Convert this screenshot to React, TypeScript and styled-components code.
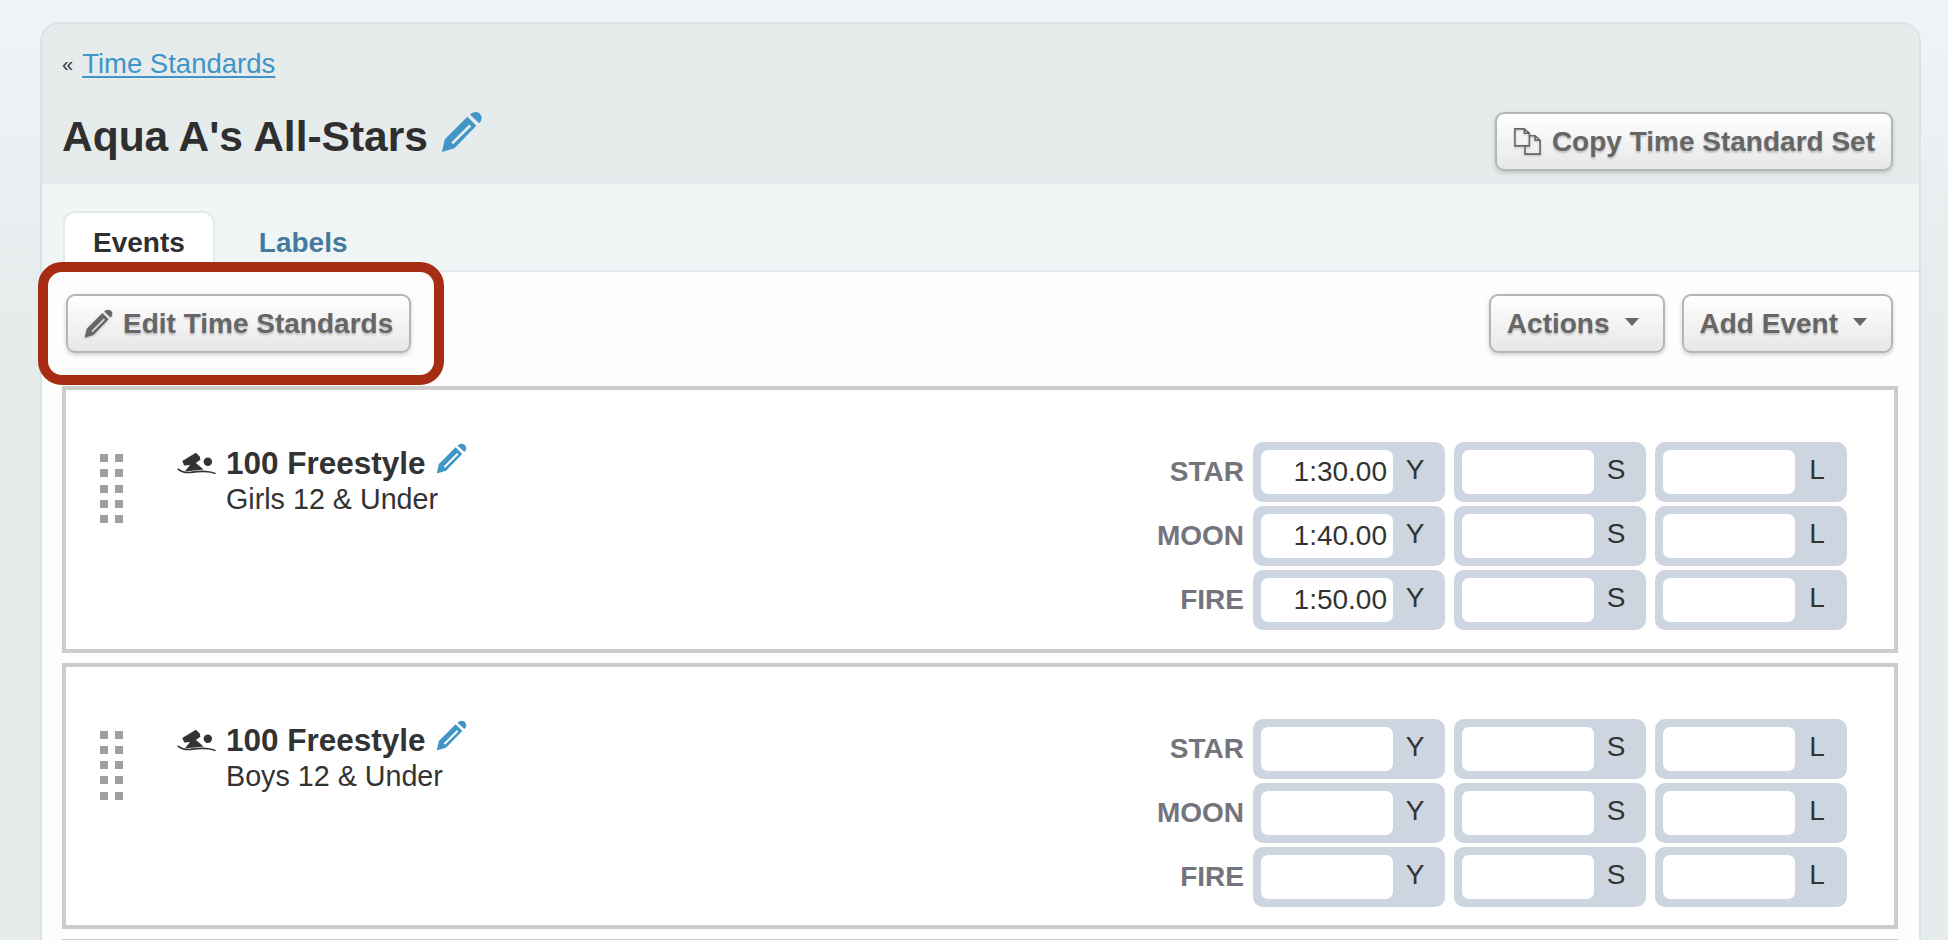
import styled, { createGlobalStyle } from 'styled-components'

const GlobalStyle = createGlobalStyle`
  html, body {
    margin: 0;
    height: 940px;
    overflow: hidden;
  }
  body {
    font-family: "Liberation Sans", Arial, sans-serif;
    color: #333;
    background: linear-gradient(to bottom, #eff5f7 0, #e6ecec 320px);
  }
`

const Page = styled.div`
  position: relative;
  height: 940px;
  overflow: hidden;
  padding: 22px 27px 0 40px;
  box-sizing: border-box;
`

const Panel = styled.div`
  border: 2px solid #d8e3e7;
  border-bottom: 0;
  border-radius: 20px 20px 0 0;
  overflow: hidden;
  background: #fdfdfd;
`

const Header = styled.div`
  height: 160px;
  box-sizing: border-box;
  padding: 20px 26px 0 20px;
  background: #e6ecec;
  border-bottom: 2px solid #e3eaed;
  display: flex;
  justify-content: space-between;
  align-items: flex-start;
`

const Crumb = styled.div`
  font-size: 27.5px;
  line-height: 40px;
  display: flex;
  align-items: center;
  gap: 9px;
`

const CrumbMark = styled.span`
  font-size: 20px;
  color: #333;
`

const CrumbLink = styled.a`
  color: #3f94c8;
  text-decoration: underline;
  text-underline-offset: 3px;
`

const TitleRow = styled.div`
  display: flex;
  align-items: flex-start;
  margin-top: 30px;
  gap: 13px;
`

const Title = styled.h1`
  margin: 0;
  font-size: 42.5px;
  line-height: 46px;
  font-weight: 700;
  color: #2f2f2f;
`

const TitlePencil = styled.span`
  margin-top: -3px;
  display: flex;
`

const Button = styled.button<{ $top?: number }>`
  height: 59px;
  margin-top: ${p => p.$top ?? 0}px;
  box-sizing: border-box;
  padding: 0 16px;
  display: inline-flex;
  align-items: center;
  border: 2px solid #b5b5b5;
  border-radius: 9px;
  background: linear-gradient(to bottom, #ffffff, #e7e7e7);
  box-shadow: 0 2px 4px rgba(0, 0, 0, 0.18);
  color: #666;
  font: 700 28px "Liberation Sans", Arial, sans-serif;
  text-shadow: 0 2px 2px rgba(0, 0, 0, 0.2);
  white-space: nowrap;
`

const ButtonIcon = styled.svg<{ $gap: number }>`
  margin-right: ${p => p.$gap}px;
  flex: none;
  filter: drop-shadow(0 1px 1px rgba(0, 0, 0, 0.2));
`

const Caret = styled.span`
  width: 0;
  height: 0;
  margin: -4px 8px 0 15px;
  border-left: 7px solid transparent;
  border-right: 7px solid transparent;
  border-top: 8px solid #666;
`

const TabBar = styled.div`
  height: 88px;
  box-sizing: border-box;
  padding-left: 21px;
  background: #f0f6f6;
  border-bottom: 2px solid #e2eaee;
  display: flex;
  align-items: flex-end;
  gap: 12px;
`

const Tab = styled.div<{ $active?: boolean }>`
  height: ${p => p.$active ? 61 : 57}px;
  box-sizing: border-box;
  padding: 0 ${p => p.$active ? 28 : 30}px;
  display: flex;
  align-items: center;
  font-size: 28px;
  font-weight: 700;
  color: ${p => p.$active ? '#2f2f2f' : '#457a9f'};
  background: ${p => p.$active ? '#fff' : 'transparent'};
  border: 2px solid ${p => p.$active ? '#e3eaee' : 'transparent'};
  border-bottom: 0;
  border-radius: 12px 12px 0 0;
  margin-bottom: ${p => p.$active ? -2 : 0}px;
`

const Toolbar = styled.div`
  height: 114px;
  box-sizing: border-box;
  padding: 22px 26px 0 24px;
  display: flex;
  justify-content: space-between;
  align-items: flex-start;
`

const ToolGroup = styled.div`
  display: flex;
  gap: 17px;
`

const Cards = styled.div`
  padding: 0 21px 0 20px;
  display: flex;
  flex-direction: column;
  gap: 10px;
`

const Card = styled.div`
  height: 266.5px;
  box-sizing: border-box;
  border: 4px solid #ccc;
  background: #fff;
  padding: 52px 47px 0 34px;
  display: flex;
`

const Handle = styled.div`
  width: 23px;
  height: 69px;
  margin-top: 12px;
  flex: none;
  display: grid;
  grid-template-columns: 8px 8px;
  grid-auto-rows: 8px;
  justify-content: space-between;
  align-content: space-between;
`

const Dot = styled.span`
  background: #9f9f9f;
`

const EventInfo = styled.div`
  margin: 3px 0 0 54px;
  display: flex;
  gap: 10px;
  flex: 1;
`

const SwimIcon = styled.svg`
  margin-top: 7px;
  flex: none;
`

const EventName = styled.div`
  display: flex;
  align-items: flex-start;
  gap: 10px;
  font-size: 31.5px;
  line-height: 36px;
  font-weight: 700;
  color: #333;
`

const EventPencil = styled.span`
  margin-top: -2px;
  display: flex;
`

const EventGroup = styled.div`
  font-size: 28.7px;
  line-height: 36px;
  color: #333;
`

const Standards = styled.div`
  display: flex;
  flex-direction: column;
  gap: 4px;
`

const StandardRow = styled.div`
  display: flex;
  align-items: center;
  justify-content: flex-end;
  gap: 9px;
`

const StandardName = styled.div`
  font-size: 28px;
  font-weight: 700;
  color: #74747c;
`

const TimeGroup = styled.label`
  width: 192px;
  height: 60px;
  box-sizing: border-box;
  padding: 8px;
  border-radius: 10px;
  background: #cdd5e0;
  display: flex;
  align-items: flex-start;
`

const TimeInput = styled.input`
  width: 132px;
  height: 44px;
  box-sizing: border-box;
  padding: 0 6px 0 0;
  border: 0;
  border-radius: 7px;
  background: #fff;
  text-align: right;
  color: #333;
  font: 400 28px "Liberation Sans", Arial, sans-serif;
`

const Course = styled.span`
  flex: 1;
  text-align: center;
  line-height: 40px;
  font-size: 28px;
  color: #333;
`

const Callout = styled.div`
  position: absolute;
  left: 38px;
  top: 262px;
  width: 406px;
  height: 123px;
  box-sizing: border-box;
  border: 10px solid #a62c14;
  border-radius: 24px;
  pointer-events: none;
`

const Pencil = ({ size, color }: { size: number; color: string }) => (
  <svg width={size} height={size} viewBox="30 20 134 134">
    <path
      fill={color}
      fillRule="evenodd"
      d="M33 148 L42 108 L112 38 L140 66 L72 136 Z M62 118 L68 124 L124 68 L118 62 Z"
    />
    <path fill={color} d="M120 31 Q134 17 150 27 Q164 42 149 58 Z" />
  </svg>
)

const Swimmer = () => (
  <SwimIcon width={39} height={22} viewBox="18 12 120 68">
    <circle cx="113" cy="42" r="13" fill="#333" />
    <path fill="#333" d="M34 40 L76 14 L88 26 L90 36 L76 46 L100 66 L42 72 L58 52 L40 54 Z" />
    <path fill="none" stroke="#333" strokeWidth="5" d="M20 64 C30 72 42 77 60 75 C80 72 100 71 115 73 C125 74 130 76 137 79" />
  </SwimIcon>
)

const CopyIcon = () => (
  <ButtonIcon $gap={10} width={29} height={31} viewBox="22 10 92 92">
    <path
      fill="none"
      stroke="#666"
      strokeWidth="5"
      d="M28 16 H58 L74 30 V70 H28 Z M58 16 V30 H74 M74 38 H92 L108 52 V96 H60 V70 M92 38 V52 H108"
    />
  </ButtonIcon>
)

const EditIcon = () => (
  <ButtonIcon $gap={9} width={30} height={30} viewBox="30 20 134 134">
    <path fill="#666" fillRule="evenodd" d="M33 148 L42 108 L112 38 L140 66 L72 136 Z M62 118 L68 124 L124 68 L118 62 Z" />
    <path fill="#666" d="M120 31 Q134 17 150 27 Q164 42 149 58 Z" />
  </ButtonIcon>
)

const standards = ['STAR', 'MOON', 'FIRE']
const courses = ['Y', 'S', 'L']

const EventCard = ({ group, times }: { group: string; times?: string[] }) => (
  <Card>
    <Handle>
      {Array.from({ length: 10 }, (_, i) => <Dot key={i} />)}
    </Handle>
    <EventInfo>
      <Swimmer />
      <div>
        <EventName>
          100 Freestyle
          <EventPencil><Pencil size={32} color="#4295c7" /></EventPencil>
        </EventName>
        <EventGroup>{group}</EventGroup>
      </div>
    </EventInfo>
    <Standards>
      {standards.map((name, row) => (
        <StandardRow key={name}>
          <StandardName>{name}</StandardName>
          {courses.map(course => (
            <TimeGroup key={course}>
              <TimeInput readOnly value={course === 'Y' && times ? times[row] : ''} />
              <Course>{course}</Course>
            </TimeGroup>
          ))}
        </StandardRow>
      ))}
    </Standards>
  </Card>
)

export default function App() {
  return (
    <Page>
      <GlobalStyle />
      <Panel>
        <Header>
          <div>
            <Crumb>
              <CrumbMark>«</CrumbMark>
              <CrumbLink href="#">Time Standards</CrumbLink>
            </Crumb>
            <TitleRow>
              <Title>Aqua A's All-Stars</Title>
              <TitlePencil><Pencil size={43} color="#4295c7" /></TitlePencil>
            </TitleRow>
          </div>
          <Button $top={68}>
            <CopyIcon />
            Copy Time Standard Set
          </Button>
        </Header>
        <TabBar>
          <Tab $active>Events</Tab>
          <Tab>Labels</Tab>
        </TabBar>
        <Toolbar>
          <Button>
            <EditIcon />
            Edit Time Standards
          </Button>
          <ToolGroup>
            <Button>Actions<Caret /></Button>
            <Button>Add Event<Caret /></Button>
          </ToolGroup>
        </Toolbar>
        <Cards>
          <EventCard group="Girls 12 & Under" times={['1:30.00', '1:40.00', '1:50.00']} />
          <EventCard group="Boys 12 & Under" />
          <Card />
        </Cards>
      </Panel>
      <Callout />
    </Page>
  )
}
